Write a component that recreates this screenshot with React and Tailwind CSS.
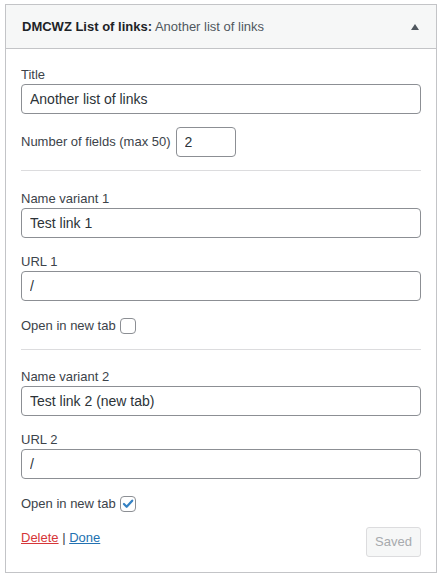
import React, { useState } from 'react';

const font = { fontFamily: '"Liberation Sans", Arial, sans-serif' };

const Field = ({ label, value, onChange, className = '' }) => (
  <div className={className}>
    <label className="block h-[18px] leading-[18px] text-[13px] text-[#3c434a]">{label}</label>
    <input
      type="text"
      value={value}
      onChange={(e) => onChange(e.target.value)}
      className="block h-[30px] w-full rounded-[4px] border border-[#8c8f94] bg-white px-[8px] text-[14px] text-[#2c3338] outline-none"
    />
  </div>
);

const Check = ({ checked, onChange, className = '' }) => (
  <div className={`flex h-[18px] items-center text-[13px] text-[#3c434a] ${className}`}>
    <span>Open in new tab</span>
    <button
      onClick={() => onChange(!checked)}
      className="ml-[4px] flex h-[16px] w-[16px] items-center justify-center rounded-[4px] border border-[#8c8f94] bg-white"
    >
      {checked && (
        <svg viewBox="0 0 20 20" className="h-[16px] w-[16px]">
          <path d="M4.2 10l3.9 4L16 5.2" fill="none" stroke="#3582c4" strokeWidth="3.2" strokeLinecap="round" strokeLinejoin="round" />
        </svg>
      )}
    </button>
  </div>
);

export default function App() {
  const [title, setTitle] = useState('Another list of links');
  const [count, setCount] = useState('2');
  const [links, setLinks] = useState([
    { name: 'Test link 1', url: '/', tab: false },
    { name: 'Test link 2 (new tab)', url: '/', tab: true },
  ]);

  const update = (i, key, v) =>
    setLinks((l) => l.map((x, j) => (j === i ? { ...x, [key]: v } : x)));

  return (
    <div className="min-h-[577px] bg-white pl-[5px] pt-[4px]" style={font}>
      <div className="w-[432px] border border-[#c3c4c7] bg-white">
        {/* Header */}
        <div className="flex h-[44px] items-center justify-between border-b border-[#c3c4c7] bg-[#f6f7f7] pl-[16px] pr-[17px]">
          <h3 className="text-[13px] text-[#1d2327]">
            <span className="font-semibold">DMCWZ List of links:</span>{' '}
            <span className="text-[#50575e]">{title}</span>
          </h3>
          <span className="h-0 w-0 border-x-[4px] border-b-[6px] border-x-transparent border-b-[#50575e]" />
        </div>

        {/* Body */}
        <div className="px-[15px] pb-[15px] pt-[17px]">
          <Field label="Title" value={title} onChange={setTitle} />

          <div className="mt-[13px] flex h-[30px] items-center text-[13px] text-[#3c434a]">
            <span>Number of fields (max 50)</span>
            <input
              type="text"
              value={count}
              onChange={(e) => setCount(e.target.value)}
              className="ml-[5px] h-[30px] w-[60px] rounded-[4px] border border-[#8c8f94] px-[8px] text-[14px] text-[#2c3338] outline-none"
            />
          </div>

          {links.map((l, i) => (
            <div key={i}>
              <div className={`h-px bg-[#dcdcde] ${i === 0 ? 'mt-[13px]' : 'mt-[14px]'}`} />
              <Field
                className={i === 0 ? 'mt-[19px]' : 'mt-[18px]'}
                label={`Name variant ${i + 1}`}
                value={l.name}
                onChange={(v) => update(i, 'name', v)}
              />
              <Field
                className="mt-[15px]"
                label={`URL ${i + 1}`}
                value={l.url}
                onChange={(v) => update(i, 'url', v)}
              />
              <Check className="mt-[16px]" checked={l.tab} onChange={(v) => update(i, 'tab', v)} />
            </div>
          ))}

          <div className="mt-[14px] flex h-[30px] items-start justify-between">
            <div className="pt-[1px] text-[13px] text-[#3c434a]">
              <a href="#" className="text-[#d63638] underline">Delete</a>
              {' | '}
              <a href="#" className="text-[#2271b1] underline">Done</a>
            </div>
            <button
              disabled
              className="h-[30px] w-[55px] rounded-[3px] border border-[#dcdcde] bg-[#f6f7f7] text-[13px] text-[#a7aaad]"
            >
              Saved
            </button>
          </div>
        </div>
      </div>
    </div>
  );
}
